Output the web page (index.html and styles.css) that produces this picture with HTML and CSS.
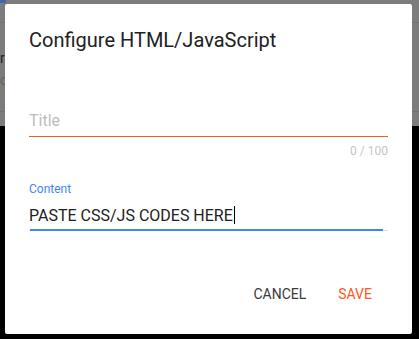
FILE: index.html
```html
<!DOCTYPE html>
<html lang="en">
<head>
    <meta charset="UTF-8">
    <meta name="viewport" content="width=device-width, initial-scale=1.0">
    <title>Configure HTML/JavaScript</title>
    <link rel="stylesheet" href="styles.css">
</head>
<body>

    <div class="page">
        <div class="page-top">
            <div class="page-tab"></div>
            <div class="page-rule"></div>
            <div class="page-line dark">r Layout</div>
            <div class="page-line warm">o Tools</div>
            <div class="page-rule low"></div>
        </div>
        <div class="page-bottom"></div>
    </div>

    <div class="dialog">
        <h1 class="dialog-title">Configure HTML/JavaScript</h1>

        <div class="field">
            <input class="field-input" type="text" placeholder="Title">
            <div class="field-counter">0 / 100</div>
        </div>

        <div class="field field-focused">
            <label class="field-label">Content</label>
            <div class="field-value">PASTE CSS/JS CODES HERE<span class="caret"></span></div>
        </div>

        <div class="dialog-actions">
            <button class="btn">Cancel</button>
            <button class="btn btn-primary">Save</button>
        </div>
    </div>

</body>
</html>
```

FILE: styles.css
```css
body {
    margin: 0;
    font-family: Roboto, "Liberation Sans", Arial, sans-serif;
    background-color: #000;
}
.page {
    height: 339px;
    display: flex;
    flex-direction: column;
}
.page-top {
    height: 126px;
    background-color: #7c7c7c;
    overflow: hidden;
}
.page-tab {
    width: 6px;
    height: 3px;
    background-color: #3b6aa8;
}
.page-rule {
    margin-top: 19px;
    height: 1px;
    background-color: #727272;
}
.page-rule.low {
    margin-top: 20px;
}
.page-line {
    font-size: 14px;
    line-height: 22px;
    white-space: nowrap;
}
.page-line.dark {
    margin-top: 24px;
    color: #222;
}
.page-line.warm {
    color: #6e6550;
}
.page-bottom {
    flex: 1;
    background-color: #000;
}

/* dialog sits over the page */
.dialog {
    position: absolute;
    left: 5px;
    top: 4px;
    width: 407px;
    height: 330px;
    box-sizing: border-box;
    padding: 24px 24px 0 24px;
    background-color: #fff;
    border-radius: 2px;
    display: flex;
    flex-direction: column;
}
.dialog-title {
    margin: 0 0 58px 0;
    font-size: 20px;
    font-weight: 400;
    line-height: 24px;
    color: #212121;
}
.field {
    display: flex;
    flex-direction: column;
}
.field-input {
    font-family: inherit;
    font-size: 16px;
    line-height: 20px;
    padding: 0 0 5px 0;
    margin: 0;
    border: none;
    border-bottom: 1px solid #f0592a;
    outline: none;
    color: #212121;
    box-sizing: border-box;
    height: 27px;
}
.field-input::placeholder {
    color: #bdbdbd;
}
.field-counter {
    margin-top: 6px;
    align-self: flex-end;
    font-size: 12px;
    line-height: 16px;
    color: #c6c6c6;
}
.field-focused {
    margin-top: 22px;
}
.field-label {
    font-size: 12px;
    line-height: 16px;
    color: #4285f4;
}
.field-value {
    margin-top: 9px;
    font-size: 16px;
    line-height: 20px;
    padding-bottom: 4px;
    color: #212121;
    border-bottom: 1px solid #e0e0e0;
    position: relative;
}
.field-value::after {
    content: "";
    position: absolute;
    left: 1px;
    right: 5px;
    bottom: -1px;
    height: 2px;
    background-color: #4285f4;
}
.caret {
    display: inline-block;
    width: 1px;
    height: 18px;
    margin-left: 1px;
    vertical-align: -3px;
    background-color: #000;
}
.dialog-actions {
    margin-top: auto;
    margin-right: -24px;
    padding: 0 24px 22px 0;
    display: flex;
    justify-content: flex-end;
}
.btn {
    font-family: inherit;
    font-size: 14px;
    font-weight: 400;
    text-transform: uppercase;
    line-height: 20px;
    padding: 8px 16px;
    background: none;
    border: none;
    color: #3a3a3a;
    cursor: pointer;
}
.btn-primary {
    color: #ff5722;
}
```
